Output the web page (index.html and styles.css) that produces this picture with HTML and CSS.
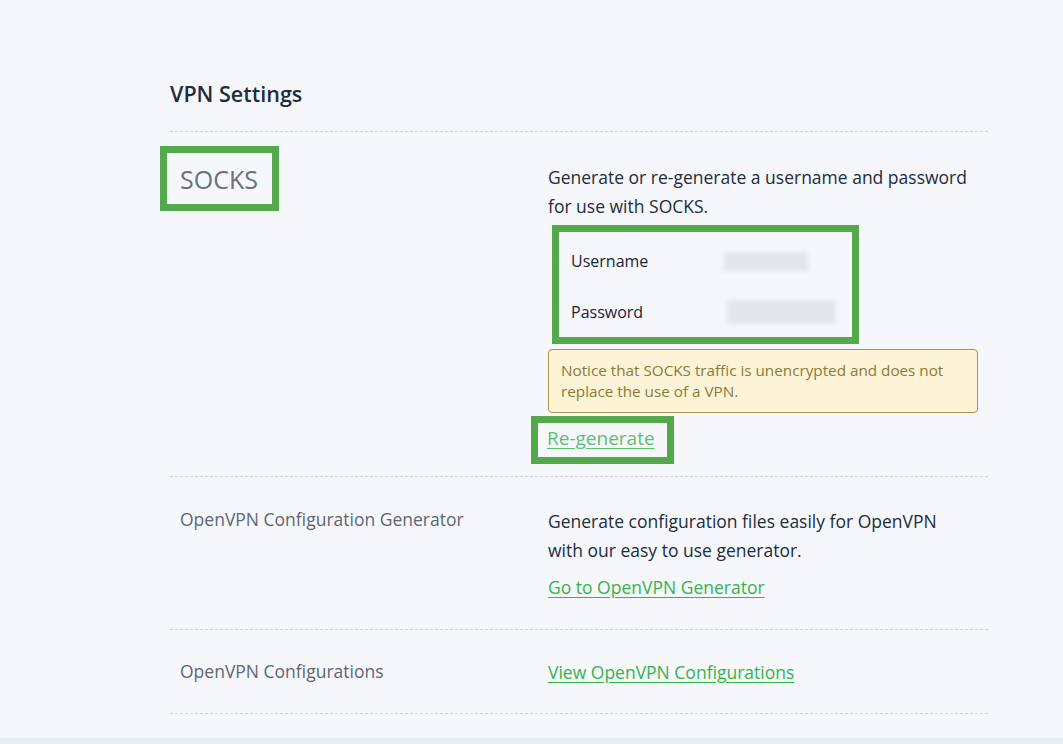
FILE: index.html
```html
<!DOCTYPE html>
<html lang="en">
<head>
<meta charset="utf-8">
<title>VPN Settings</title>
<link rel="stylesheet" href="styles.css">
</head>
<body>
<main class="page">
  <section class="settings">
    <h2 class="title">VPN Settings</h2>

    <div class="row row-socks">
      <div class="label-cell">
        <div class="mark socks-mark"><span class="socks-label">SOCKS</span></div>
      </div>
      <div class="content-cell">
        <p class="desc">Generate or re-generate a username and password for use with SOCKS.</p>
        <div class="mark creds">
          <div class="cred-row"><span class="cred-label">Username</span><span class="blur blur-user"></span></div>
          <div class="cred-row"><span class="cred-label">Password</span><span class="blur blur-pass"></span></div>
        </div>
        <div class="notice">Notice that SOCKS traffic is unencrypted and does not replace the use of a VPN.</div>
        <div class="mark regen-mark"><a href="#" class="link regen">Re-generate</a></div>
      </div>
    </div>

    <div class="row row-gen">
      <div class="label-cell"><span class="label">OpenVPN Configuration Generator</span></div>
      <div class="content-cell">
        <p class="desc">Generate configuration files easily for OpenVPN with our easy to use generator.</p>
        <a href="#" class="link link-gap">Go to OpenVPN Generator</a>
      </div>
    </div>

    <div class="row row-conf">
      <div class="label-cell"><span class="label">OpenVPN Configurations</span></div>
      <div class="content-cell">
        <a href="#" class="link">View OpenVPN Configurations</a>
      </div>
    </div>
  </section>
</main>
<footer class="strip"></footer>
</body>
</html>
```

FILE: styles.css
```css
* { box-sizing: border-box; }

html, body {
  margin: 0;
  padding: 0;
}

body {
  background: #f5f7fb;
  font-family: "Open Sans", "Noto Sans", "DejaVu Sans", sans-serif;
  color: #273142;
  height: 744px;
  display: flex;
  flex-direction: column;
}

.page {
  flex: 1;
}

.settings {
  width: 818px;
  margin-left: 170px;
  padding-top: 79px;
}

.title {
  margin: 0;
  font-size: 21.5px;
  font-weight: 600;
  line-height: 30px;
  color: #232d3c;
  padding-bottom: 22px;
  border-bottom: 1px dashed #cfd3d8;
}

.row {
  display: grid;
  grid-template-columns: 378px 430px;
  border-bottom: 1px dashed #cfd3d8;
}

.label-cell {
  padding-left: 10px;
}

.label {
  font-size: 17.5px;
  line-height: 28px;
  color: #5f6672;
}

.desc {
  margin: 0;
  max-width: 422px;
  font-size: 17.5px;
  line-height: 28.5px;
  color: #232c3b;
}

.link {
  font-size: 17.5px;
  line-height: 28px;
  color: #33b54c;
  text-decoration: underline;
  text-underline-offset: 3px;
}

/* annotation highlight boxes */
.mark {
  border: 7px solid #53a94b;
  background: #f5f7fb;
}

.row-socks {
  padding-bottom: 12px;
}

.row-socks .label-cell {
  padding-left: 0;
  padding-top: 14px;
}

.socks-mark {
  display: inline-block;
  margin-left: -10px;
  width: 119px;
  height: 65px;
  padding: 11px 0 0 13px;
}

.socks-label {
  font-size: 25px;
  line-height: 30px;
  color: #6a717c;
}

.row-socks .content-cell {
  padding-top: 31px;
}

.creds {
  margin-top: 5px;
  margin-left: 4px;
  width: 307px;
  height: 119px;
  padding: 15px 0 0 12px;
  display: flex;
  flex-direction: column;
  gap: 23px;
}

.cred-row {
  display: flex;
  align-items: center;
  height: 28px;
}

.cred-label {
  width: 153px;
  font-size: 16px;
  color: #1d2433;
}

.blur {
  display: block;
  background: #e4e5e8;
  filter: blur(2px);
}

.blur-user {
  width: 84px;
  height: 19px;
}

.blur-pass {
  width: 108px;
  height: 24px;
  margin-left: 3px;
}

.notice {
  margin-top: 5px;
  width: 430px;
  padding: 10px 12px 10px;
  background: #fdf3d6;
  border: 1px solid #a8974a;
  border-radius: 4px;
  font-size: 15.25px;
  line-height: 21px;
  color: #8a7b3a;
}

.regen-mark {
  margin-top: 3px;
  margin-left: -17px;
  width: 143px;
  height: 48px;
  padding: 1px 0 0 9px;
}

.regen {
  font-size: 19px;
  line-height: 28px;
  color: #5fbf75;
}

.row-gen .content-cell {
  padding-top: 30px;
  padding-bottom: 28px;
}

.row-gen .label-cell {
  padding-top: 28px;
  padding-bottom: 28px;
}

.link-gap {
  display: inline-block;
  margin-top: 9px;
}

.row-conf .content-cell {
  padding-top: 28px;
  padding-bottom: 27px;
}

.row-conf .label-cell {
  padding-top: 27px;
  padding-bottom: 27px;
}

.strip {
  height: 6px;
  background: #e7eef0;
}
```
